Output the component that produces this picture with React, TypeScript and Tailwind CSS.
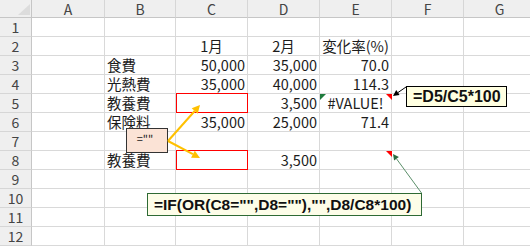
import React from "react";

const cols = ["A", "B", "C", "D", "E", "F", "G"];

type Cell = { t?: string; a?: "l" | "c" | "r"; red?: boolean };

const data: Record<number, Record<string, Cell>> = {
  2: { C: { t: "1月", a: "c" }, D: { t: "2月", a: "c" }, E: { t: "変化率(%)", a: "c" } },
  3: { B: { t: "食費" }, C: { t: "50,000", a: "r" }, D: { t: "35,000", a: "r" }, E: { t: "70.0", a: "r" } },
  4: { B: { t: "光熱費" }, C: { t: "35,000", a: "r" }, D: { t: "40,000", a: "r" }, E: { t: "114.3", a: "r" } },
  5: { B: { t: "教養費" }, C: { red: true }, D: { t: "3,500", a: "r" }, E: { t: "#VALUE!", a: "c" } },
  6: { B: { t: "保険料" }, C: { t: "35,000", a: "r" }, D: { t: "25,000", a: "r" }, E: { t: "71.4", a: "r" } },
  8: { B: { t: "教養費" }, C: { red: true }, D: { t: "3,500", a: "r" } },
};

const font = { fontFamily: '"Noto Sans CJK JP", "Noto Sans", sans-serif' };

export default function App() {
  const rows = Array.from({ length: 12 }, (_, i) => i + 1);
  return (
    <div className="relative w-[530px] h-[246px] overflow-hidden bg-white" style={font}>
      <div className="grid w-[536px] grid-cols-[32px_73px_71px_72px_72px_72px_72px_72px] grid-rows-[18px_repeat(12,19px)] text-[14.5px] text-[#1c1c1c]">
        <div className="relative bg-[#efefef] border-r border-b border-[#c6c6c6]">
          <svg width="32" height="18" className="absolute left-0 top-0">
            <polygon points="18,15 30,15 30,4" fill="#dcdcdc" />
          </svg>
        </div>
        {cols.map((c) => (
          <div
            key={c}
            className="bg-[#efefef] border-r border-b border-r-[#d6d6d6] border-b-[#c6c6c6] flex items-center justify-center text-[14px] text-[#444] leading-none"
          >
            {c}
          </div>
        ))}
        {rows.map((r) => (
          <React.Fragment key={r}>
            <div className="bg-[#efefef] border-r border-b border-r-[#c6c6c6] border-b-[#d6d6d6] flex items-center justify-center text-[14px] text-[#444] leading-none">
              {r}
            </div>
            {cols.map((c) => {
              const cell = data[r]?.[c];
              const align =
                cell?.a === "r" ? "justify-end" : cell?.a === "c" ? "justify-center" : "justify-start";
              return (
                <div
                  key={c}
                  className={`relative border-r border-b border-[#d9d9d9] flex items-center px-[2px] leading-none whitespace-nowrap ${align}`}
                >
                  {cell?.t}
                  {cell?.red && (
                    <div className="absolute left-0 top-[-1px] right-[-1px] bottom-[-1px] border border-[#ff0000]" />
                  )}
                </div>
              );
            })}
          </React.Fragment>
        ))}
      </div>

      {/* small ="" box */}
      <div className="absolute left-[126px] top-[128px] w-[42px] h-[25px] bg-[#fbe3d6] border border-[#333] flex items-start justify-center pt-[4px] pr-[4px] text-[11px] leading-none text-[#222]">
        =""
      </div>

      {/* =D5/C5*100 callout */}
      <div
        className="absolute left-[406px] top-[86px] w-[101px] h-[21px] bg-[#ffffe1] border border-[#000] flex items-center pl-[6px] text-[16px] font-bold leading-none text-[#111]"
        style={{ fontFamily: '"Liberation Sans", Arial, sans-serif' }}
      >
        =D5/C5*100
      </div>

      {/* formula callout */}
      <div
        className="absolute left-[147px] top-[193px] w-[275px] h-[23px] bg-[#fdfde8] border border-[#2e6a34] flex items-center pl-[6px] text-[15.5px] font-bold leading-none text-[#111] whitespace-nowrap"
        style={{ fontFamily: '"Liberation Sans", Arial, sans-serif' }}
      >
        =IF(OR(C8="",D8=""),"",D8/C8*100)
      </div>

      <svg width="530" height="246" className="absolute left-0 top-0 pointer-events-none">
        {/* indicators */}
        <polygon points="320,94 326,94 320,100" fill="#1e7b3c" />
        <polygon points="386,94 392,94 392,100" fill="#ff0000" />
        <polygon points="386,151 392,151 392,157" fill="#ff0000" />
        {/* yellow arrows */}
        <line x1="168" y1="141" x2="194.7" y2="111" stroke="#ffc000" strokeWidth="2" />
        <polygon points="200,105 197.7,113.7 191.7,108.3" fill="#ffc000" />
        <line x1="168" y1="141" x2="192.9" y2="154.2" stroke="#ffc000" strokeWidth="2" />
        <polygon points="200,158 191,157.7 194.8,150.7" fill="#ffc000" />
        {/* black arrow */}
        <line x1="406" y1="87" x2="397.9" y2="92.6" stroke="#000" strokeWidth="1" />
        <polygon points="393,96 396.2,90.1 399.6,95.1" fill="#000" />
        {/* green arrow */}
        <line x1="421.5" y1="193" x2="396.5" y2="158.8" stroke="#5b8f6a" strokeWidth="1" />
        <polygon points="393,154 398.9,157.1 394.1,160.6" fill="#2b6b3f" />
      </svg>
    </div>
  );
}
